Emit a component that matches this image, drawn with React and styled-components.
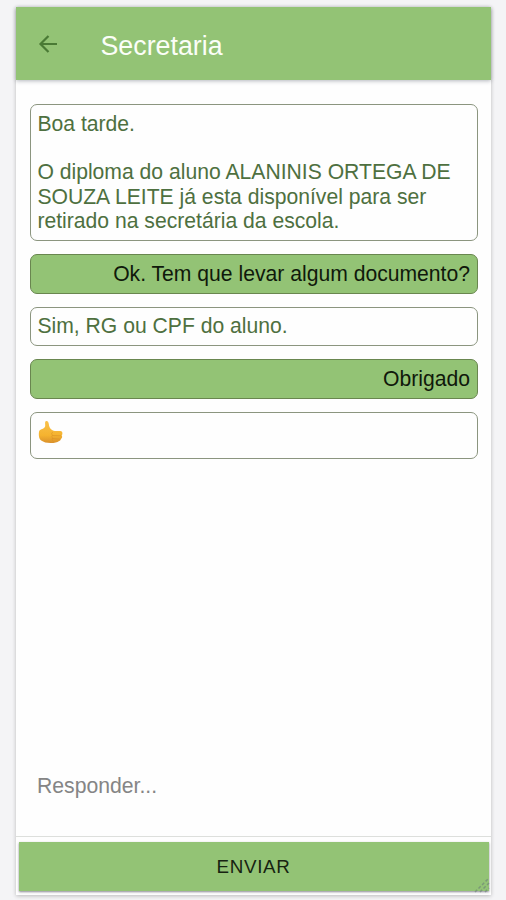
import styled, { createGlobalStyle } from 'styled-components';

const messages = [
  {
    id: 1,
    text: 'Boa tarde.\n\nO diploma do aluno ALANINIS ORTEGA DE SOUZA LEITE já esta disponível para ser retirado na secretária da escola.',
  },
  { id: 2, text: 'Ok. Tem que levar algum documento?', mine: true },
  { id: 3, text: 'Sim, RG ou CPF do aluno.' },
  { id: 4, text: 'Obrigado', mine: true },
  { id: 5, thumb: true },
];

const ThumbsUp = () => (
  <ThumbIcon viewBox="0 0 25 24" role="img" aria-label="joinha">
    <defs>
      <linearGradient id="skin" x1="0" y1="0" x2="0" y2="1">
        <stop offset="0" stopColor="#f9c14a" />
        <stop offset="0.65" stopColor="#f5b32f" />
        <stop offset="1" stopColor="#d9902b" />
      </linearGradient>
    </defs>
    <path
      fill="url(#skin)"
      d="M7.6 1.2C9.2.3 10.500 1.600 10.800 3.900c.3 2.500 1 4.400 2.600 5.700 1 .9 2 1.300 3.400 1.400l5.500.1c1.500.1 2.200 1 2.100 2.300 0 .9-.3 1.500-.8 1.900.5.500.7 1.200.5 2-.1.900-.7 1.500-1.400 1.700.1 1.100-.5 1.800-1.600 2-2 1.400-5 2.200-8.600 2.100-3.800 0-7-.8-9.300-2.500C.8 19 .400 14 1.200 11 2.500 9.200 6.300 9 7.100 6.600c.5-1.500-.6-4.300.5-5.400z"
    />
    <path
      fill="none"
      stroke="#d78d25"
      strokeWidth="0.8"
      strokeLinecap="round"
      d="M14.500 12.300c-1.200.700-1.200 2.200.1 2.900-1.200.900-1 2.300.1 2.900-.9 1-.6 2.300.4 3M15 15.500l8 .3M15 18.500l7 .7"
      opacity="0.7"
    />
  </ThumbIcon>
);

const App = () => {
  return (
    <>
      <GlobalStyle />
      <Phone>
        <Header>
          <BackButton type="button" aria-label="Voltar">
            <svg viewBox="0 0 20 20" width="20" height="20">
              <path
                d="M19 10H2.500M10.500 2L2.500 10l8 8"
                fill="none"
                stroke="currentColor"
                strokeWidth="2.200"
              />
            </svg>
          </BackButton>
          <Title>Secretaria</Title>
        </Header>

        <Messages>
          {messages.map(({ id, text, mine, thumb }) => (
            <Bubble key={id} $mine={mine} $thumb={thumb}>
              {thumb ? <ThumbsUp /> : text}
            </Bubble>
          ))}
        </Messages>

        <Reply placeholder="Responder..." />

        <Footer>
          <SendButton type="button">
            ENVIAR
            <Grip viewBox="0 0 16 16">
              <path
                d="M1 15L15 1M6 15l9-9M11 15l4-4"
                stroke="#6b7f78"
                strokeWidth="1.500"
                strokeDasharray="3 2"
              />
            </Grip>
          </SendButton>
        </Footer>
      </Phone>
    </>
  );
};

const GlobalStyle = createGlobalStyle`
  * {
    box-sizing: border-box;
  }

  body {
    margin: 0;
    height: 900px;
    overflow: hidden;
    background-color: #f4f4f6;
    font-family: 'Liberation Sans', Arial, sans-serif;
  }
`;

const Phone = styled.div`
  width: 475px;
  height: 888px;
  margin: 7px 0 0 16px;
  display: flex;
  flex-direction: column;
  background-color: #fefefe;
  box-shadow: 0 1px 4px rgba(0, 0, 0, 0.24);
`;

const Header = styled.header`
  flex: none;
  height: 73px;
  display: flex;
  align-items: center;
  background-color: #93c375;
  box-shadow: 0 1px 4px rgba(40, 50, 70, 0.35);
`;

const BackButton = styled.button`
  display: flex;
  margin-left: 22px;
  padding: 0;
  border: none;
  background-color: transparent;
  color: #4a7a35;
`;

const Title = styled.h1`
  margin: 5px 0 0 42.5px;
  font-size: 26.8px;
  font-weight: normal;
  color: #fbfef8;
`;

const Messages = styled.main`
  flex: 1;
  display: flex;
  flex-direction: column;
  gap: 13.3px;
  padding: 24px 13px 0 14px;
`;

const Bubble = styled.div`
  height: ${(props) => (props.$thumb ? '47px' : 'auto')};
  padding: 6.5px 7px 6.4px 6.4px;
  border: 1px solid ${(props) => (props.$mine ? '#69864f' : '#8b957f')};
  border-radius: 7px;
  background-color: ${(props) => (props.$mine ? '#93c375' : '#fefefe')};
  color: ${(props) => (props.$mine ? '#10190b' : '#4e7040')};
  font-size: 21.15px;
  line-height: 24.4px;
  text-align: ${(props) => (props.$mine ? 'right' : 'left')};
  white-space: pre-line;
`;

const ThumbIcon = styled.svg`
  display: block;
  width: 25px;
  height: 24px;
  margin-left: 1px;
`;

const Reply = styled.textarea`
  flex: none;
  height: 62px;
  margin: 0 14px;
  padding: 0 7px;
  border: none;
  outline: none;
  resize: none;
  background-color: transparent;
  font-family: inherit;
  font-size: 21.2px;
  line-height: 24px;

  &::placeholder {
    color: #858585;
    opacity: 1;
  }
`;

const Footer = styled.footer`
  flex: none;
  height: 59px;
  padding: 5px 2px 4px 3px;
  border-top: 1px solid #dddfdc;
`;

const SendButton = styled.button`
  position: relative;
  display: block;
  width: 100%;
  height: 48.5px;
  padding: 1px 1px 0 0;
  border: none;
  background-color: #93c375;
  box-shadow: 0 1px 2px rgba(40, 40, 60, 0.55);
  color: #172311;
  font-family: inherit;
  font-size: 18.8px;
  letter-spacing: 0.7px;
`;

const Grip = styled.svg`
  position: absolute;
  right: -1px;
  bottom: -2px;
  width: 16px;
  height: 16px;
  opacity: 0.6;
`;

export default App;
